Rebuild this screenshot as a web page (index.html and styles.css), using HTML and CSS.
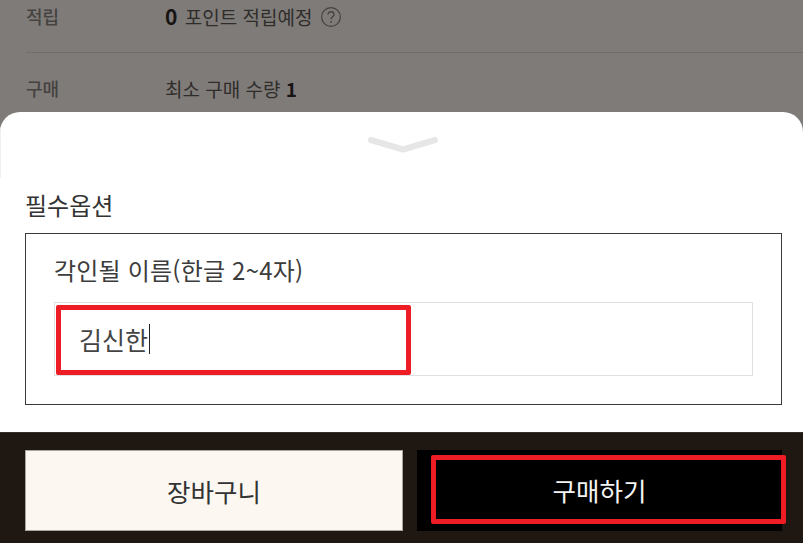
FILE: index.html
```html
<!DOCTYPE html>
<html lang="ko">
<head>
    <meta charset="UTF-8">
    <meta name="viewport" content="width=device-width, initial-scale=1.0">
    <title>필수옵션</title>
    <link rel="stylesheet" href="styles.css">
</head>
<body>
    <div class="page">
        <!-- Dimmed product info behind the sheet -->
        <div class="info">
            <div class="info-row first">
                <span class="info-label">적립</span>
                <span class="info-value"><b class="point">0</b> 포인트 적립예정</span>
                <svg class="help" width="22" height="22" viewBox="0 0 22 22" fill="none" stroke="#45423f">
                    <circle cx="11" cy="11" r="9.4" stroke-width="1.2"/>
                    <path d="M8 8.6c0-1.8 1.3-2.9 3-2.9s3 1.1 3 2.7c0 2.4-3 2.4-3 4.9" stroke-width="1.4"/>
                    <path d="M11 15v1.7" stroke-width="1.5"/>
                </svg>
            </div>
            <div class="info-row">
                <span class="info-label">구매</span>
                <span class="info-value">최소 구매 수량 <b>1</b></span>
            </div>
        </div>

        <!-- Option sheet -->
        <div class="sheet">
            <div class="sheet-handle">
                <svg width="72" height="20" viewBox="0 0 72 20" fill="none">
                    <path d="M4 4L36 13.500L68 4" stroke="#e6e6e6" stroke-width="6" stroke-linecap="round" stroke-linejoin="round"/>
                </svg>
            </div>
            <div class="sheet-title">필수옵션</div>
            <div class="option-box">
                <div class="option-label">각인될 이름(한글 2~4자)</div>
                <div class="option-input"><span>김신한</span><i class="caret"></i></div>
            </div>
        </div>

        <div class="footer">
            <button class="btn btn-cart">장바구니</button>
            <button class="btn btn-buy">구매하기</button>
        </div>

        <!-- Red annotation boxes -->
        <div class="mark mark-input"></div>
        <div class="mark mark-buy"></div>
    </div>
</body>
</html>
```
FILE: styles.css
```css
html, body {
    margin: 0;
    padding: 0;
    height: 100%;
    overflow: hidden;
}

body {
    font-family: "Noto Sans CJK KR", "Noto Sans", sans-serif;
    color: #333;
}

.page {
    position: relative;
    width: 803px;
    height: 543px;
    display: flex;
    flex-direction: column;
    overflow: hidden;
    background: #7f7b78;
}

/* Dimmed info rows */
.info {
    height: 112px;
    padding: 0 0 0 26px;
    box-sizing: border-box;
    color: #2f2d2b;
    font-size: 19px;
}

.info-row {
    display: flex;
    align-items: center;
    height: 59px;
    padding-top: 11px;
    box-sizing: border-box;
    line-height: 25px;
}

.info-row.first {
    height: 53px;
    padding-top: 0;
    padding-bottom: 19px;
    border-bottom: 1px solid #716d6a;
}

.info-label {
    width: 139px;
    font-size: 18px;
    font-weight: 500;
    color: #454341;
}

.info-value b {
    font-weight: 700;
    color: #161514;
}

.info-value .point {
    margin-right: 2px;
    font-size: 21px;
}

.help {
    margin-left: 8px;
}

/* Sheet */
.sheet {
    height: 320px;
    background: #fff;
    border-radius: 20px 20px 0 0;
    box-sizing: border-box;
    padding: 0 21px 0 25px;
    overflow: hidden;
}

.sheet-handle {
    display: flex;
    justify-content: center;
    height: 42px;
    padding: 24px 0 0 2px;
    margin: 0 -21px 0 -25px;
    border-left: 1px solid #f0f0f0;
}

.sheet-title {
    margin-top: 12px;
    font-size: 24px;
    line-height: 30px;
    color: #333;
}

.option-box {
    margin-top: 13px;
    height: 172px;
    box-sizing: border-box;
    border: 1px solid #3a3a3a;
    padding: 21px 28px 0;
}

.option-label {
    font-size: 24px;
    line-height: 30px;
    letter-spacing: 0.2px;
    color: #3c3c3c;
}

.option-input {
    display: flex;
    align-items: center;
    margin-top: 17px;
    height: 74px;
    box-sizing: border-box;
    border: 1px solid #e0e0e0;
    padding-left: 24px;
    font-size: 25px;
    color: #444;
}

.caret {
    width: 1px;
    height: 30px;
    margin-left: 1px;
    background: #222;
}

/* Footer */
.footer {
    flex: 1;
    display: flex;
    gap: 14px;
    padding: 17px 21px 12px 25px;
    background: #1f1812;
    border-top: 1px solid #33302c;
    box-sizing: border-box;
}

.btn {
    border: 0;
    padding: 0;
    font-family: inherit;
    font-size: 25.500px;
}

.btn-cart {
    width: 378px;
    background: #fcf7f1;
    border: 1px solid #a8a49f;
    color: #333;
}

.btn-buy {
    width: 365px;
    padding-bottom: 3px;
    background: #000;
    color: #f4f4f4;
}

/* Annotations */
.mark {
    position: absolute;
    box-sizing: border-box;
    border: 5px solid #ee1c25;
    border-radius: 2px;
}

.mark-input {
    left: 56px;
    top: 305px;
    width: 355px;
    height: 70px;
}

.mark-buy {
    left: 431px;
    top: 455px;
    width: 355px;
    height: 69px;
}
```
